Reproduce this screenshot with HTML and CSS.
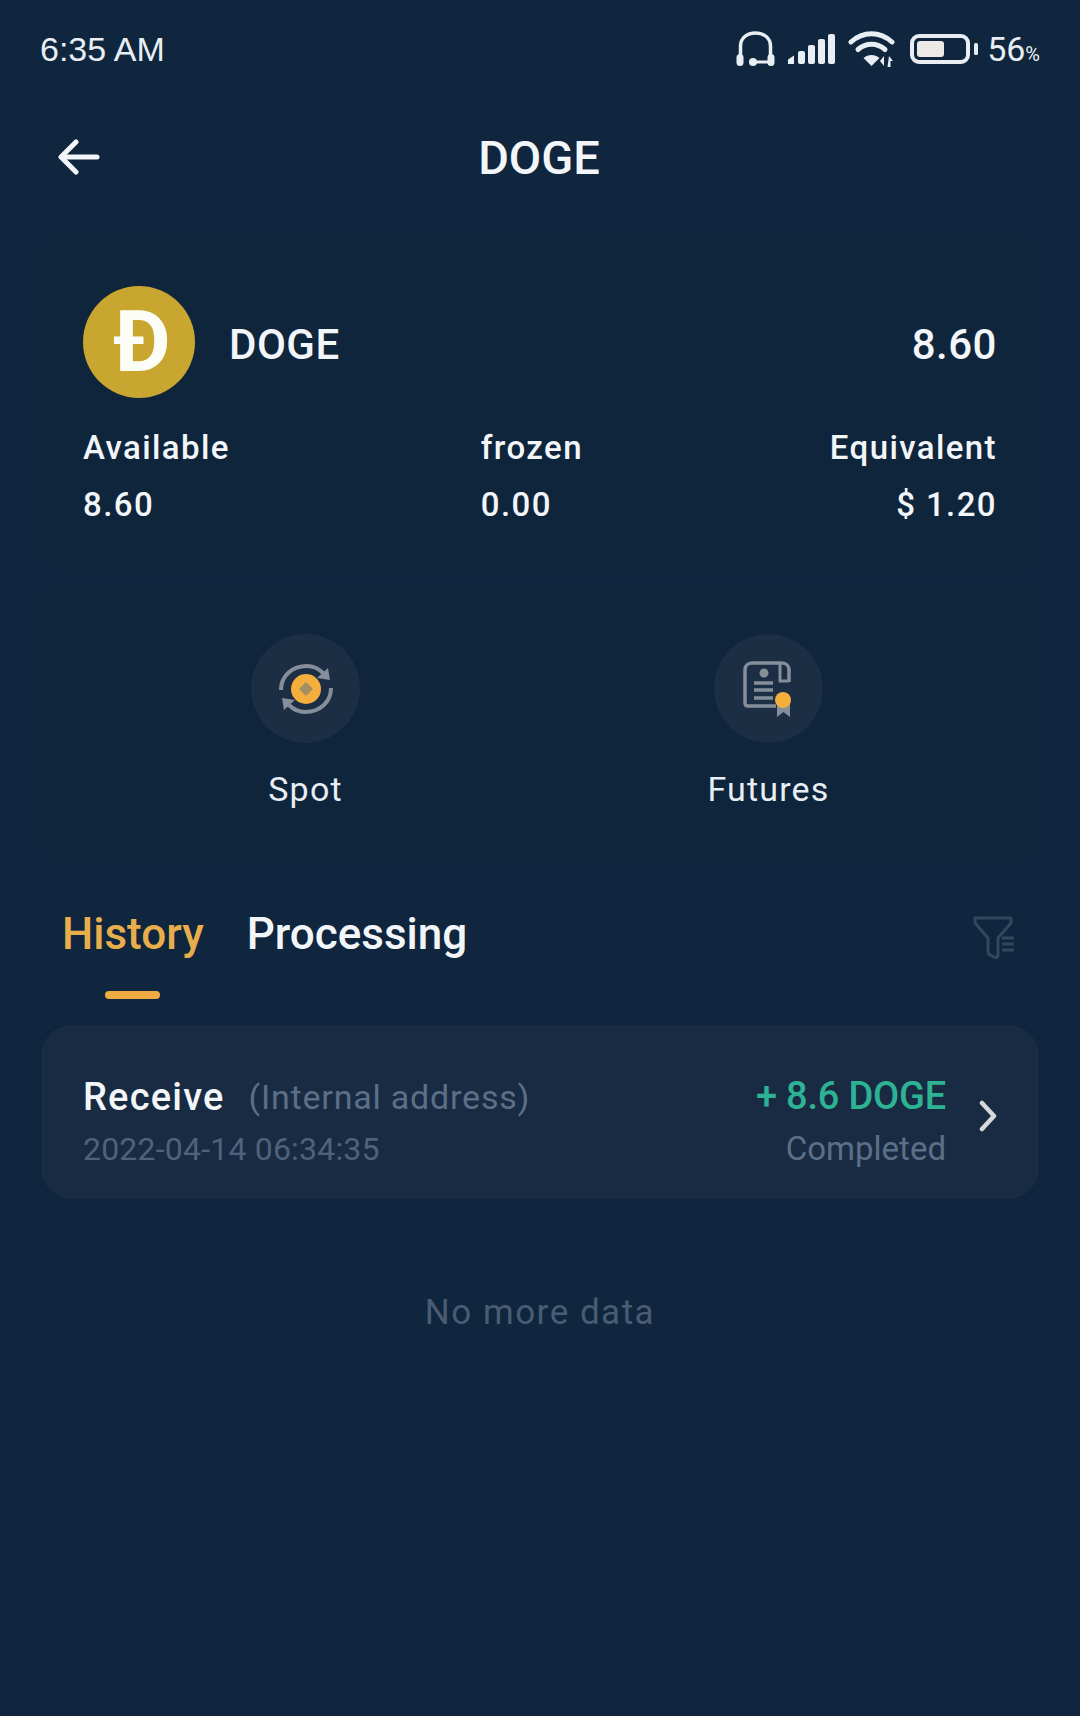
FILE: index.html
```html
<!DOCTYPE html>
<html>
<head>
    <meta name="viewport" content="width=device-width initial-scale=1.0">
    <title>DOGE</title>
    <link rel="stylesheet" href="styles.css">
</head>
<body>
    <div class="status_bar">
        <span class="status_time">6:35 AM</span>
        <div class="status_icons">
            <svg class="icon_headset" viewBox="0 0 39 36" fill="none" stroke="#e8eef3">
                <path d="M4.5 26V15C4.5 7 11 2 19.5 2S34.5 7 34.5 15V26" stroke-width="3.5"/>
                <rect x="0.5" y="23" width="7" height="12" rx="3.5" fill="#e8eef3" stroke="none"/>
                <rect x="31.5" y="23" width="7" height="12" rx="3.5" fill="#e8eef3" stroke="none"/>
                <circle cx="17" cy="31" r="4" fill="#e8eef3" stroke="none"/>
                <path d="M17 31H34" stroke-width="3"/>
            </svg>
            <svg class="icon_signal" viewBox="0 0 48 30" fill="#e8eef3">
                <path d="M0 30V25.5L6 21.5V30Z"/>
                <rect x="10" y="17" width="7" height="13" rx="2"/>
                <rect x="20" y="11" width="7" height="19" rx="2"/>
                <rect x="30" y="5" width="7" height="25" rx="2"/>
                <rect x="40" y="0" width="7" height="30" rx="2"/>
            </svg>
            <svg class="icon_wifi" viewBox="0 0 47 36" fill="none" stroke="#e8eef3" stroke-width="5" stroke-linecap="round">
                <path d="M3 11C15 0 32 0 44 11"/>
                <path d="M10 18.5C18 11.5 29 11.5 37 18.5"/>
                <path d="M23.5 35L15.5 27C20 23 27 23 31.5 27Z" fill="#e8eef3" stroke="none"/>
                <path d="M32 30L36 25V35ZM41 25L45 30H42.5V36H39.5Z" fill="#e8eef3" stroke="none"/>
            </svg>
            <svg class="icon_battery" viewBox="0 0 68 30">
                <rect x="2" y="2" width="56" height="26" rx="7" fill="none" stroke="#e8eef3" stroke-width="4"/>
                <rect x="7" y="7" width="27" height="16" rx="3" fill="#ece9e6"/>
                <rect x="64" y="9" width="4" height="12" rx="1.5" fill="#e8eef3"/>
            </svg>
            <span class="status_pct">56<small>%</small></span>
        </div>
    </div>

    <header class="top_bar">
        <svg class="back_arrow" viewBox="0 0 42 36" fill="none" stroke="#f2f6f9" stroke-width="5" stroke-linecap="round" stroke-linejoin="round">
            <path d="M18 3L3 18L18 33"/>
            <path d="M4 18H39"/>
        </svg>
        <h1>DOGE</h1>
    </header>

    <section class="card balance_card">
        <div class="coin_row">
            <div class="coin">Ð</div>
            <span class="coin_name">DOGE</span>
            <span class="coin_total">8.60</span>
        </div>
        <div class="balance_row">
            <div class="balance_col">
                <p>Available</p>
                <p>8.60</p>
            </div>
            <div class="balance_col balance_middle">
                <p>frozen</p>
                <p>0.00</p>
            </div>
            <div class="balance_col balance_right">
                <p>Equivalent</p>
                <p>$ 1.20</p>
            </div>
        </div>
    </section>

    <section class="card link_card">
        <div class="link_item">
            <div class="link_circle">
                <svg viewBox="0 0 60 60" width="60" height="60" fill="none">
                    <path d="M5 31C5 17 16 7 31 7C38 7 43 10 47 14" stroke="#868f99" stroke-width="4"/>
                    <path d="M55 29C55 43 44 53 29 53C22 53 17 50 13 46" stroke="#868f99" stroke-width="4"/>
                    <path d="M41 19L54 21L52 9Z" fill="#868f99"/>
                    <path d="M19 41L6 39L8 51Z" fill="#868f99"/>
                    <circle cx="30" cy="30" r="15" fill="#f4ae3d"/>
                    <path d="M30 23L37 30L30 37L23 30Z" fill="#a18f62"/>
                </svg>
            </div>
            <span>Spot</span>
        </div>
        <div class="link_item">
            <div class="link_circle">
                <svg viewBox="0 0 60 60" width="60" height="60" fill="none">
                    <path d="M37 47H9C7 47 6 46 6 44V11C6 7 9 4 13 4H43C47 4 50 7 50 11V23" stroke="#868f99" stroke-width="3.5"/>
                    <path d="M41 5V22H50" stroke="#868f99" stroke-width="3"/>
                    <circle cx="25" cy="14" r="4.5" fill="#868f99"/>
                    <path d="M15 24H34M15 31H34M15 39H34" stroke="#868f99" stroke-width="3.5"/>
                    <path d="M38 44H51V58L44.5 53L38 58Z" fill="#868f99"/>
                    <circle cx="44" cy="41" r="8" fill="#f4ae3d"/>
                </svg>
            </div>
            <span>Futures</span>
        </div>
    </section>

    <div class="tabs">
        <div class="tab tab_active">History</div>
        <div class="tab">Processing</div>
        <svg class="filter_icon" viewBox="0 0 42 44" fill="none" stroke="#34475f" stroke-width="3" stroke-linejoin="round">
            <path d="M2 3H38V8L25 23V40C25 42 23 43 21 42L17 40C15 39 15 38 15 36V23L2 8Z"/>
            <path d="M29 23H41M29 29H41M29 35H41"/>
        </svg>
    </div>

    <div class="record">
        <div class="record_left">
            <div class="record_title"><b>Receive</b><span>(Internal address)</span></div>
            <div class="record_date">2022-04-14 06:34:35</div>
        </div>
        <div class="record_right">
            <div class="record_amount">+ 8.6 DOGE</div>
            <div class="record_state">Completed</div>
        </div>
        <svg class="chevron" viewBox="0 0 18 32" fill="none" stroke="#d5d9dc" stroke-width="4.5" stroke-linecap="round" stroke-linejoin="round">
            <path d="M3 3L15 16L3 29"/>
        </svg>
    </div>

    <p class="no_more">No more data</p>
</body>
</html>
```

FILE: styles.css
```css
* {
    box-sizing: border-box;
    font-family: Roboto, "Liberation Sans", sans-serif;
}
html, body {
    margin: 0;
    padding: 0;
}
body {
    width: 1080px;
    height: 1716px;
    overflow: hidden;
    background-color: #0f263e;
    color: #f2f6f9;
}
p, h1 {
    margin: 0;
}

.status_bar {
    height: 98px;
    padding: 0 40px 0 40px;
    display: flex;
    align-items: center;
    justify-content: space-between;
}
.status_time {
    font-family: "Liberation Sans", sans-serif;
    font-size: 34px;
    color: #e8eef3;
}
.status_icons {
    display: flex;
    align-items: center;
}
.icon_headset {
    width: 39px;
    height: 36px;
    margin-right: 13px;
}
.icon_signal {
    width: 48px;
    height: 30px;
    margin-right: 12px;
}
.icon_wifi {
    width: 47px;
    height: 36px;
    margin-right: 15px;
}
.icon_battery {
    width: 68px;
    height: 30px;
    margin-right: 9px;
}
.status_pct {
    font-size: 34px;
    color: #e8eef3;
}
.status_pct small {
    font-size: 20px;
}

.top_bar {
    height: 118px;
    padding-left: 58px;
    position: relative;
    display: flex;
    align-items: center;
}
.back_arrow {
    width: 42px;
    height: 36px;
}
.top_bar h1 {
    position: absolute;
    left: 0;
    right: 2px;
    text-align: center;
    font-size: 47px;
    font-weight: 500;
}

.card {
    margin: 0 40px;
    background-color: #0f253c;
    border-radius: 28px;
}
.balance_card {
    margin-top: 19px;
    height: 335px;
    padding: 51px 43px 0;
}
.coin_row {
    display: flex;
    align-items: center;
}
.coin {
    width: 112px;
    height: 112px;
    padding-left: 6px;
    border-radius: 50%;
    background-color: #c9a62f;
    color: #fdfdf8;
    font-size: 86px;
    font-weight: 700;
    line-height: 112px;
    text-align: center;
}
.coin_name {
    margin-top: 4px;
    margin-left: 34px;
    font-size: 42px;
    font-weight: 500;
    letter-spacing: 0.5px;
}
.coin_total {
    margin-top: 4px;
    margin-left: auto;
    font-size: 42px;
    font-weight: 500;
    letter-spacing: 0.5px;
}
.balance_row {
    margin-top: 21px;
    display: flex;
    justify-content: space-between;
}
.balance_col p {
    font-size: 33px;
    font-weight: 500;
    line-height: 57px;
    letter-spacing: 1.4px;
}
.balance_middle {
    margin-left: 4px;
}
.balance_right {
    text-align: right;
}

.link_card {
    margin-top: 14px;
    height: 275px;
    padding: 50px 6px 0 0;
    display: flex;
    justify-content: center;
    gap: 263px;
}
.link_item {
    width: 200px;
    display: flex;
    flex-direction: column;
    align-items: center;
    font-size: 34px;
    letter-spacing: 1.2px;
    color: #e8eef3;
}
.link_circle {
    width: 109px;
    height: 109px;
    margin-bottom: 26px;
    border-radius: 50%;
    background-color: #1b2e44;
    display: flex;
    align-items: center;
    justify-content: center;
}

.tabs {
    height: 167px;
    padding: 43px 65px 0 62px;
    display: flex;
    align-items: flex-start;
    gap: 43px;
}
.tab {
    position: relative;
    font-size: 44px;
    font-weight: 500;
    line-height: 64px;
}
.tab_active {
    color: #e9ae4c;
}
.tab_active::after {
    content: "";
    position: absolute;
    left: 43px;
    bottom: -33px;
    width: 55px;
    height: 8px;
    border-radius: 4px;
    background-color: #efac42;
}
.filter_icon {
    margin-left: auto;
    margin-top: 13px;
    width: 42px;
    height: 44px;
}

.record {
    margin: 0 42px;
    height: 172px;
    padding: 0 43px 0 39px;
    background-color: #182b42;
    border: 2px solid #1a2e46;
    border-radius: 28px;
    display: flex;
    align-items: center;
}
.record_left, .record_right {
    margin-top: 20px;
}
.record_title {
    display: flex;
    align-items: baseline;
    line-height: 52px;
}
.record_title b {
    font-size: 38px;
    font-weight: 500;
    letter-spacing: 1.2px;
}
.record_title span {
    position: relative;
    top: -1px;
    margin-left: 24px;
    font-size: 34px;
    letter-spacing: 0.8px;
    color: #5b6f88;
}
.record_date {
    font-size: 32px;
    line-height: 50px;
    letter-spacing: 0.2px;
    color: #4f627b;
}
.record_right {
    margin-left: auto;
    text-align: right;
}
.record_amount {
    font-size: 38px;
    font-weight: 500;
    line-height: 52px;
    letter-spacing: -0.2px;
    color: #2db394;
}
.record_state {
    margin-top: 2px;
    font-size: 33px;
    line-height: 50px;
    color: #5b6f88;
}
.chevron {
    margin-top: 8px;
    margin-left: 33px;
    margin-right: -4px;
    width: 18px;
    height: 32px;
}

.no_more {
    margin-top: 94px;
    text-align: center;
    font-size: 35px;
    letter-spacing: 1.5px;
    color: #4a5c73;
}
```
